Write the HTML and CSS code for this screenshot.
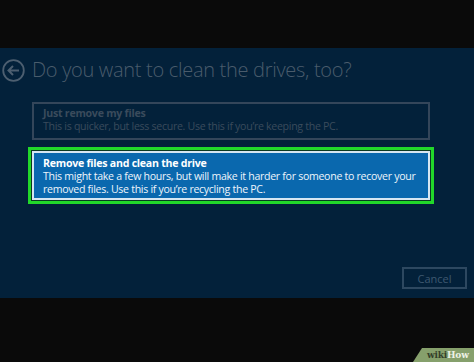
FILE: index.html
```html
<!DOCTYPE html>
<html>
<head>
<meta charset="utf-8">
<link rel="stylesheet" href="styles.css">
</head>
<body>
<div class="screen">
  <div class="topbar"></div>
  <div class="panel">
    <div class="title-row">
      <svg class="back" width="23" height="23" viewBox="0 0 23 23">
        <circle cx="11.5" cy="11.5" r="10.3" fill="none" stroke="#4d5f70" stroke-width="1.8"/>
        <path d="M17 11.5H6.5M11 7l-4.5 4.5L11 16" fill="none" stroke="#4d5f70" stroke-width="2"/>
      </svg>
      <h1 class="title">Do you want to clean the drives, too?</h1>
    </div>
    <div class="options">
      <div class="option option-dim">
        <div class="opt-head">Just remove my files</div>
        <div class="opt-body">This is quicker, but less secure. Use this if you’re keeping the PC.</div>
      </div>
      <div class="option option-sel">
        <div class="opt-head">Remove files and clean the drive</div>
        <div class="opt-body">This might take a few hours, but will make it harder for someone to recover your removed files. Use this if you’re recycling the PC.</div>
      </div>
    </div>
    <div class="actions">
      <div class="cancel">Cancel</div>
    </div>
  </div>
  <div class="bottombar"></div>
  <div class="wm"><span class="wm-wiki">wiki</span><span class="wm-how">How</span></div>
</div>
</body>
</html>
```

FILE: styles.css
```css
* { box-sizing: border-box; margin: 0; padding: 0; }
html, body { width: 474px; height: 362px; overflow: hidden; background: #0a0a0a; }
body { font-family: "Open Sans", "Liberation Sans", sans-serif; }
.screen { position: relative; width: 474px; height: 362px; display: flex; flex-direction: column; }
.topbar { height: 48px; background: #0a0a0a; }
.bottombar { flex: 1; background: #0a0a0a; }
.panel { height: 250px; background: #03213a; display: flex; flex-direction: column; }
.title-row { display: flex; align-items: center; height: 24px; margin-top: 10px; padding-left: 2px; }
.back { flex: none; }
.title { font-weight: 300; font-size: 20px; color: #4a5c6c; margin-left: 7px; letter-spacing: -0.3px; line-height: 24px; white-space: nowrap; }
.options { display: flex; flex-direction: column; margin: 20px 0 0 32px; width: 398px; gap: 11px; }
.option { padding: 3px 4px 3px 9px; }
.option-dim { height: 38px; border: 2px solid #34465a; color: #3a4b5c; padding-top: 3px; }
.option-sel { height: 49px; background: #0a68ae; border: 2px solid #d6e6f2; box-shadow: 0 0 0 1px #0b3a22, 0 0 0 4px #22d82a; color: #fff; padding-top: 4px; }
.opt-head { font-weight: 700; font-size: 10.6px; line-height: 13px; letter-spacing: -0.25px; }
.opt-body { font-size: 10.6px; line-height: 13px; letter-spacing: -0.3px; }
.option-sel .opt-body { color: #eef5fb; }
.actions { display: flex; justify-content: flex-end; margin-top: auto; margin-bottom: 9px; padding-right: 7px; }
.cancel { width: 65px; height: 22px; border: 2px solid #2d4860; color: #3e5870; font-size: 11px; display: flex; align-items: center; justify-content: center; }
.wm { position: absolute; right: 0; bottom: 0; width: 61px; height: 14px; background: #86a06c; clip-path: polygon(9px 0, 100% 0, 100% 100%, 0 100%); font-family: "DejaVu Serif", "Liberation Serif", serif; font-weight: 700; font-size: 9px; line-height: 14px; padding-left: 14px; letter-spacing: -0.2px; }
.wm-wiki { color: #34402a; }
.wm-how { color: #eef2e6; }
```
